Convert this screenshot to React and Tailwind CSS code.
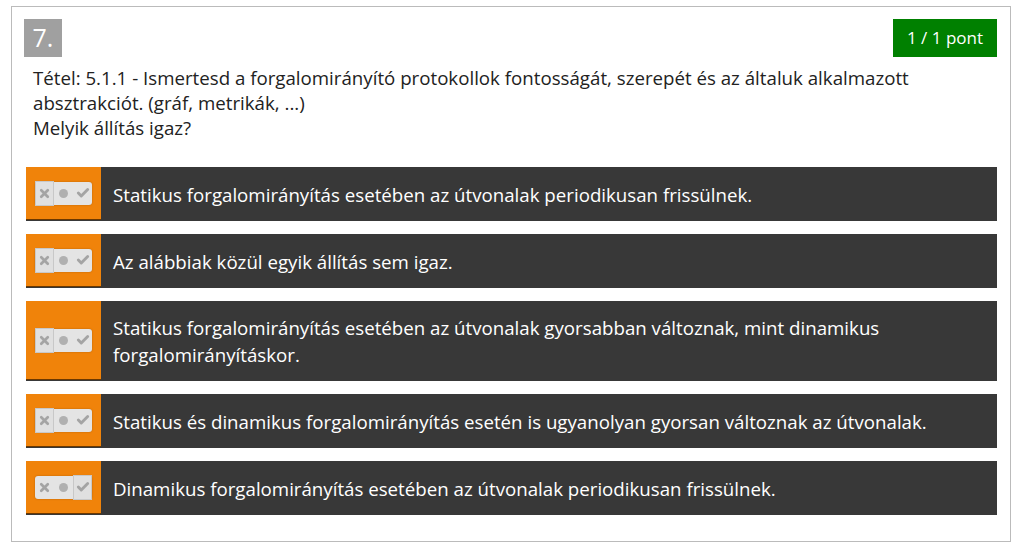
import { X, Check } from 'lucide-react'

const answers = [
  { text: 'Statikus forgalomirányítás esetében az útvonalak periodikusan frissülnek.', pick: 'x' },
  { text: 'Az alábbiak közül egyik állítás sem igaz.', pick: 'x' },
  { text: 'Statikus forgalomirányítás esetében az útvonalak gyorsabban változnak, mint dinamikus forgalomirányításkor.', pick: 'x' },
  { text: 'Statikus és dinamikus forgalomirányítás esetén is ugyanolyan gyorsan változnak az útvonalak.', pick: 'x' },
  { text: 'Dinamikus forgalomirányítás esetében az útvonalak periodikusan frissülnek.', pick: 'check' },
]

function Toggle({ pick }) {
  return (
    <div className="relative flex h-[23px] w-[57px] items-center rounded-[3px] bg-[#e4e4e4] shadow-[0_0_2px_rgba(0,0,0,0.25)]">
      <div className={`flex h-[25px] w-[19px] items-center justify-center ${pick === 'x' ? 'border border-[#c8c8c8] bg-[#e0e0e0]' : ''}`}>
        <X className="h-[13px] w-[13px] text-[#a4a4a4]" strokeWidth={5} />
      </div>
      <div className="flex w-[19px] items-center justify-center">
        <div className="h-[9px] w-[9px] rounded-full bg-[#b0b0b0]" />
      </div>
      <div className={`flex h-[25px] w-[19px] items-center justify-center ${pick === 'check' ? 'border border-[#c8c8c8] bg-[#e0e0e0]' : ''}`}>
        <Check className="h-[14px] w-[14px] text-[#a4a4a4]" strokeWidth={5} />
      </div>
    </div>
  )
}

export default function App() {
  return (
    <div className="bg-white pl-[11px] pt-[6px] font-['Open_Sans',sans-serif]" style={{ width: 1036, height: 548 }}>
      <div className="w-[1000px] border border-[#bbbbbb] px-[12px] pt-[12px] pb-[26px]">
        <div className="flex items-start justify-between">
          <div className="flex h-[38px] w-[38px] items-center justify-center bg-[#a0a0a0] text-[25px] text-white">7.</div>
          <div className="mr-[1px] flex h-[38px] w-[104px] items-center justify-center bg-[#008000] text-[17px] text-white">1 / 1 pont</div>
        </div>
        <div className="mt-[8px] pl-[9px] text-[18.7px] leading-[25px] text-[#222]">
          Tétel: 5.1.1 - Ismertesd a forgalomirányító protokollok fontosságát, szerepét és az általuk alkalmazott absztrakciót. (gráf, metrikák, ...)
          <br />
          Melyik állítás igaz?
        </div>
        <div className="ml-[2px] mr-[1px] mt-[27px] flex flex-col gap-[13px]">
          {answers.map((a, i) => (
            <div key={i} className="flex min-h-[54px] bg-[#383838]">
              <div className="mb-[1px] flex w-[75px] shrink-0 items-center justify-center border-b border-[#6b3800] bg-[#f0830a]">
                <Toggle pick={a.pick} />
              </div>
              <div className="flex items-center px-[12px] py-[13px] text-[18.7px] leading-[27px] text-white">{a.text}</div>
            </div>
          ))}
        </div>
      </div>
    </div>
  )
}
